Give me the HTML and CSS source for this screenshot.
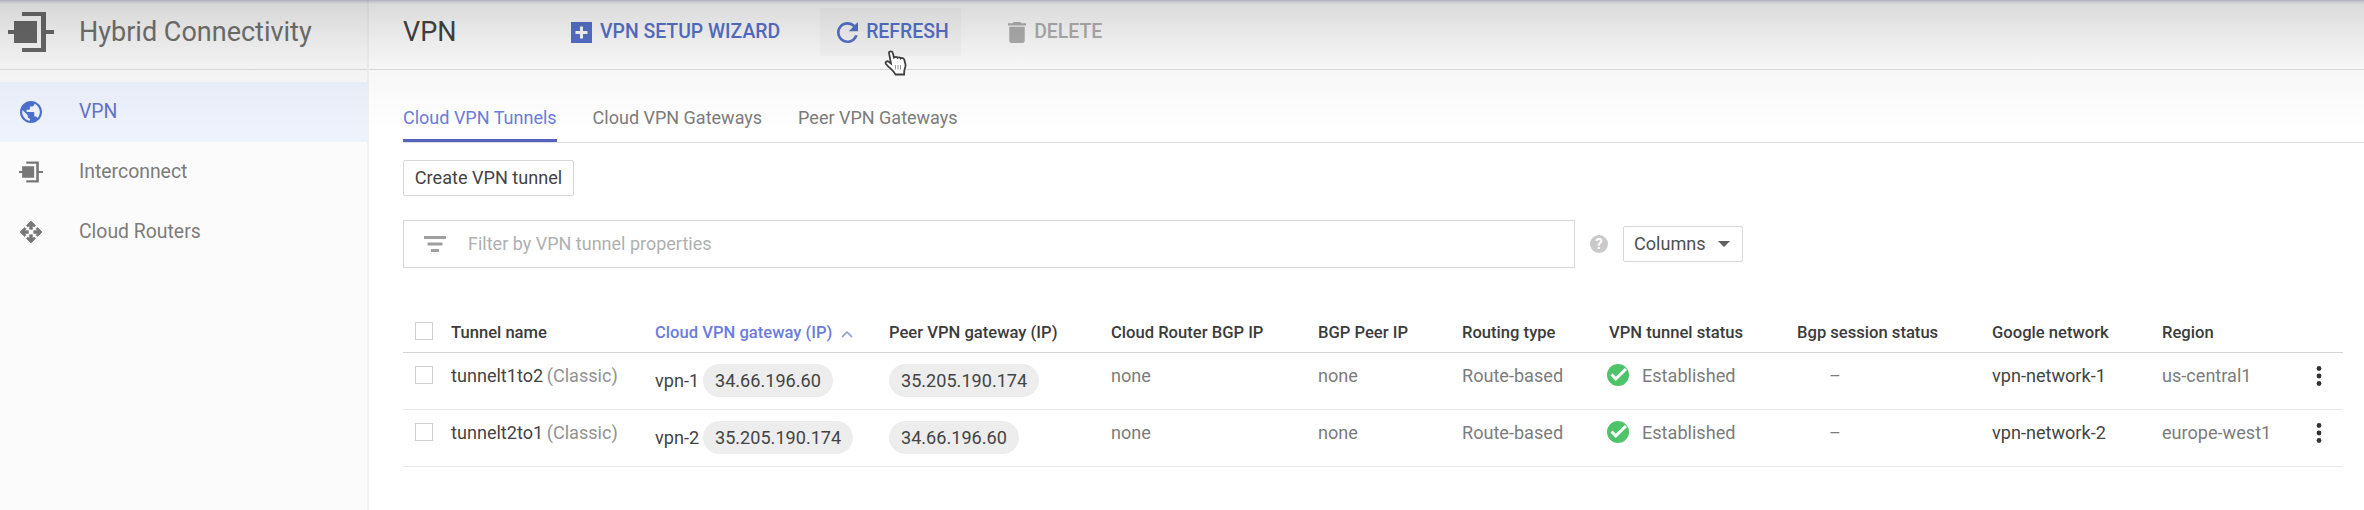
FILE: index.html
```html
<!DOCTYPE html>
<html lang="en">
<head>
<meta charset="utf-8">
<title>VPN - Hybrid Connectivity</title>
<link rel="stylesheet" href="styles.css">
</head>
<body>
<div class="app">
  <aside class="sidebar">
    <div class="product">
      <svg class="product-icon" viewBox="0 0 46 42"><path d="M0 19h6v4H0zM38 19h8v4h-8zM6 10h23v22H6zM14 1h24v40H14v-4h19V5H14z"/></svg>
      <span class="product-name">Hybrid Connectivity</span>
    </div>
    <nav class="nav">
      <a class="nav-item active">
        <svg class="nav-icon" viewBox="2 2 20 20"><path d="M12 2C6.480 2 2 6.480 2 12s4.480 10 10 10 10-4.480 10-10S17.520 2 12 2zm-1 17.930c-3.950-.49-7-3.850-7-7.930 0-.62.08-1.210.21-1.790L9 15v1c0 1.100.9 2 2 2v1.930zm6.900-2.540c-.26-.81-1-1.390-1.900-1.390h-1v-3c0-.55-.45-1-1-1H8v-2h2c.55 0 1-.45 1-1V7h2c1.100 0 2-.9 2-2v-.41c2.930 1.190 5 4.060 5 7.410 0 2.080-.8 3.970-2.100 5.390z"/></svg>
        <span>VPN</span></a>
      <a class="nav-item">
        <svg class="nav-icon wide" viewBox="0 0 46 42"><path d="M0 19h6v4H0zM38 19h8v4h-8zM6 10h23v22H6zM14 1h24v40H14v-4h19V5H14z"/></svg>
        <span>Interconnect</span></a>
      <a class="nav-item">
        <svg class="nav-icon wide" viewBox="0 0 24 24"><path d="M12 0l5 5-1.500 1.500-2-1.500v4h-3V5l-2 1.500L7 5zM12 24l-5-5 1.500-1.500 2 1.500v-4h3v4l2-1.500L17 19zM0 12l5-5 1.500 1.500-1.500 2h4v3H5l1.500 2L5 17zM24 12l-5 5-1.500-1.500 1.500-2h-4v-3h4l-1.500-2L19 7z" stroke="#777" stroke-width=".8" stroke-linejoin="round"/></svg>
        <span>Cloud Routers</span></a>
    </nav>
  </aside>
  <main class="main">
    <header class="toolbar">
      <h1 class="title">VPN</h1>
      <button class="action wizard"><svg class="action-icon" viewBox="0 0 21 21"><path fill-rule="evenodd" d="M0 0h21v21H0zM9 4.500v4.500H4.500v3H9v4.500h3V12h4.500V9H12V4.500z"/></svg><span>VPN SETUP WIZARD</span></button>
      <button class="action refresh"><svg class="action-icon" viewBox="4 4 16 16"><path d="M17.650 6.350C16.200 4.900 14.210 4 12 4c-4.420 0-7.990 3.580-7.990 8s3.570 8 7.990 8c3.730 0 6.840-2.550 7.730-6h-2.080c-.82 2.330-3.040 4-5.650 4-3.310 0-6-2.690-6-6s2.690-6 6-6c1.660 0 3.140.69 4.220 1.780L13 11h7V4l-2.350 2.350z"/></svg><span>REFRESH</span></button>
      <button class="action delete"><svg class="action-icon" viewBox="5 3 14 18" preserveAspectRatio="none"><path d="M6 19c0 1.100.9 2 2 2h8c1.100 0 2-.9 2-2V7H6v12zM19 4h-3.500l-1-1h-5l-1 1H5v2h14V4z"/></svg><span>DELETE</span></button>
    </header>
    <div class="tabs">
      <a class="tab selected">Cloud VPN Tunnels</a>
      <a class="tab">Cloud VPN Gateways</a>
      <a class="tab">Peer VPN Gateways</a>
    </div>
    <div class="content">
      <button class="create">Create VPN tunnel</button>
      <div class="filter-bar">
        <div class="filter">
          <svg class="filter-icon" viewBox="0 0 22 16"><path d="M0 0h22v3H0zM3.500 6.500h15v3h-15zM7 13h8v3H7z"/></svg>
          <span>Filter by VPN tunnel properties</span>
        </div>
        <span class="help">?</span>
        <button class="columns"><span>Columns</span><i class="caret"></i></button>
      </div>
      <div class="table">
        <div class="row head">
          <div class="check"><i class="box"></i></div>
          <div>Tunnel name</div>
          <div class="sorted">Cloud VPN gateway (IP)<svg class="sort" viewBox="0 0 12 8"><path d="M1 7l5-5 5 5"/></svg></div>
          <div>Peer VPN gateway (IP)</div>
          <div>Cloud Router BGP IP</div>
          <div>BGP Peer IP</div>
          <div>Routing type</div>
          <div>VPN tunnel status</div>
          <div>Bgp session status</div>
          <div>Google network</div>
          <div>Region</div>
          <div></div>
        </div>
        <div class="row">
          <div class="check"><i class="box"></i></div>
          <div><span class="link">tunnelt1to2</span> <span class="kind">(Classic)</span></div>
          <div class="ip"><span class="link">vpn-1</span><span class="chip">34.66.196.60</span></div>
          <div class="ip"><span class="chip">35.205.190.174</span></div>
          <div>none</div>
          <div>none</div>
          <div>Route-based</div>
          <div class="status"><svg class="ok" viewBox="0 0 22 22"><circle cx="11" cy="11" r="11"/><path d="M4.500 10.500l4.300 4.300L19 5"/></svg><span>Established</span></div>
          <div class="dash">–</div>
          <div class="link">vpn-network-1</div>
          <div>us-central1</div>
          <div class="more"><svg viewBox="0 0 6 20"><circle cx="3" cy="2.500" r="2.400"/><circle cx="3" cy="10" r="2.400"/><circle cx="3" cy="17.500" r="2.400"/></svg></div>
        </div>
        <div class="row">
          <div class="check"><i class="box"></i></div>
          <div><span class="link">tunnelt2to1</span> <span class="kind">(Classic)</span></div>
          <div class="ip"><span class="link">vpn-2</span><span class="chip">35.205.190.174</span></div>
          <div class="ip"><span class="chip">34.66.196.60</span></div>
          <div>none</div>
          <div>none</div>
          <div>Route-based</div>
          <div class="status"><svg class="ok" viewBox="0 0 22 22"><circle cx="11" cy="11" r="11"/><path d="M4.500 10.500l4.300 4.300L19 5"/></svg><span>Established</span></div>
          <div class="dash">–</div>
          <div class="link">vpn-network-2</div>
          <div>europe-west1</div>
          <div class="more"><svg viewBox="0 0 6 20"><circle cx="3" cy="2.500" r="2.400"/><circle cx="3" cy="10" r="2.400"/><circle cx="3" cy="17.500" r="2.400"/></svg></div>
        </div>
      </div>
    </div>
  </main>
  <div class="shade"></div>
  <svg class="pointer" viewBox="0 0 24 26"><path d="M5 3c0-2.200 3.300-2.200 3.800 0l1.200 4.500c1-1 3-.8 3.500.3 1-.8 2.800-.5 3.200.6 1-.8 3-.2 3.500 1.200l1.300 4.900c.4 2-.8 4-1.200 6l-.2 4H11.500C10 20.500 5.500 18.500 2 14c-1.200-2 .8-3.500 2.800-2.200l2.200 1.700z"/><path class="crease" d="M11.500 15v4.500M14 15v4.500M16.500 15v4.500"/></svg>
</div>
</body>
</html>
```
FILE: styles.css
```css
* { box-sizing: border-box; }
body { margin: 0; font-family: Roboto, "Liberation Sans", sans-serif; font-size: 18.1px; line-height: 24px; color: #7c7c7c; background: #fff; }
button { font: inherit; margin: 0; padding: 0; color: inherit; background: none; border: 0; }
span, .row > div { white-space: nowrap; }

.app { position: relative; display: flex; width: 2364px; height: 510px; overflow: hidden; }

.sidebar { width: 369px; flex: none; background: #fbfbfb; border-right: 2px solid #f2f2f2; }
.product { display: flex; align-items: center; height: 70px; padding: 0 0 6px 8px; border-bottom: 1px solid #dedede; }
.product-icon { width: 46px; height: 42px; fill: #666; margin-right: 25px; }
.product-name { padding-top: 1px; font-size: 27px; color: #707070; }
.nav { padding-top: 12px; font-size: 19.4px; }
.nav-item { display: flex; align-items: center; height: 60px; padding-left: 20px; }
.nav-icon { width: 22px; height: 22px; margin-right: 37px; fill: #777; }
.nav-icon.wide { width: 24px; margin: 0 36px 0 -1px; }
.nav-item.active { background: #edf2fd; color: #6474c6; }
.nav-item.active .nav-icon { fill: #4a6fd0; }

.main { flex: 1; min-width: 0; }
.toolbar { display: flex; align-items: center; height: 70px; padding: 0 0 5px 34px; border-bottom: 1px solid #dedede; }
.title { width: 168px; margin: 0; font-size: 27px; font-weight: 400; color: #404040; }
.action { display: flex; align-items: center; height: 48px; font-size: 19.4px; font-weight: 500; color: #5570cc; }
.action-icon { width: 21px; height: 21px; margin-right: 8px; fill: currentColor; }
.refresh { width: 141px; margin-left: 40px; padding-left: 17px; background: rgba(90, 100, 140, .04); }
.delete { margin-left: 47px; color: #b0b0b0; }
.delete .action-icon { width: 18px; }

.tabs { display: flex; gap: 36px; height: 73px; margin-left: 34px; padding-top: 36px; border-bottom: 1px solid #dedede; font-size: 18px; }
.tab { height: 36px; }
.tab.selected { color: #6b7cdb; border-bottom: 3px solid #5563bb; }

.content { padding: 17px 21px 0 34px; }
.create { display: block; width: 171px; height: 36px; color: #444; border: 1px solid #d8d8d8; border-radius: 2px; }
.filter-bar { display: flex; align-items: center; margin-top: 24px; }
.filter { display: flex; align-items: center; width: 1172px; height: 48px; padding-left: 20px; border: 1px solid #d8d8d8; font-size: 18px; color: #b0b0b0; }
.filter-icon { width: 22px; height: 16px; margin-right: 22px; fill: #a0a0a0; }
.help { width: 18px; height: 18px; margin-left: 15px; border-radius: 50%; background: #c9c9c9; color: #fff; font-size: 15px; font-weight: 700; line-height: 18px; text-align: center; }
.columns { display: flex; align-items: center; width: 120px; height: 36px; margin-left: 15px; padding-left: 10px; color: #505050; border: 1px solid #d8d8d8; border-radius: 2px; }
.caret { margin-left: 12px; border: 6px solid transparent; border-top-color: #606060; border-bottom: 0; }

.table { margin-top: 41px; }
.row { display: grid; grid-template-columns: 48px 204px 234px 222px 207px 144px 147px 188px 195px 170px 154px 1fr; height: 57px; padding-top: 11px; border-bottom: 1px solid #e8e8e8; }
.head { height: 44px; padding-top: 12px; font-size: 16.6px; font-weight: 500; color: #3c3c3c; border-color: #d4d4d4; }
.check { padding: 2px 0 0 12px; }
.head .check { padding-top: 1px; }
.box { display: block; width: 18px; height: 18px; border: 1px solid #d0d0d0; }
.sorted { color: #6b7cdb; }
.sort { width: 12px; height: 8px; margin-left: 9px; fill: none; stroke: #9fa8da; stroke-width: 1.800; }
.link { color: #444; }
.kind { margin-left: -1px; color: #929292; }
.ip { display: flex; line-height: 33px; color: #444; }
.ip .link { width: 48px; }
.chip { height: 33px; padding: 0 12px; border-radius: 17px; background: #ededed; }
.status { display: flex; margin-left: -2px; }
.ok { width: 22px; height: 22px; margin-right: 13px; fill: #4fc36a; }
.ok path { fill: none; stroke: #fff; stroke-width: 3; }
.dash { padding-left: 32px; }
.more { padding-top: 2px; }
.more svg { width: 6px; height: 20px; fill: #333; }

.shade { position: absolute; inset: 0 0 auto; height: 140px; pointer-events: none; background: linear-gradient(rgba(90, 92, 110, .5) 0, rgba(90, 92, 110, .4) 1px, rgba(40, 40, 40, .17) 4px, rgba(40, 40, 40, .1) 35px, rgba(40, 40, 40, .04) 68px, transparent 130px); }
.pointer { position: absolute; left: 884px; top: 50px; width: 24px; height: 26px; fill: #fff; stroke: #404040; stroke-width: 1.800; }
.pointer .crease { stroke: #999; stroke-width: 1; }
```
